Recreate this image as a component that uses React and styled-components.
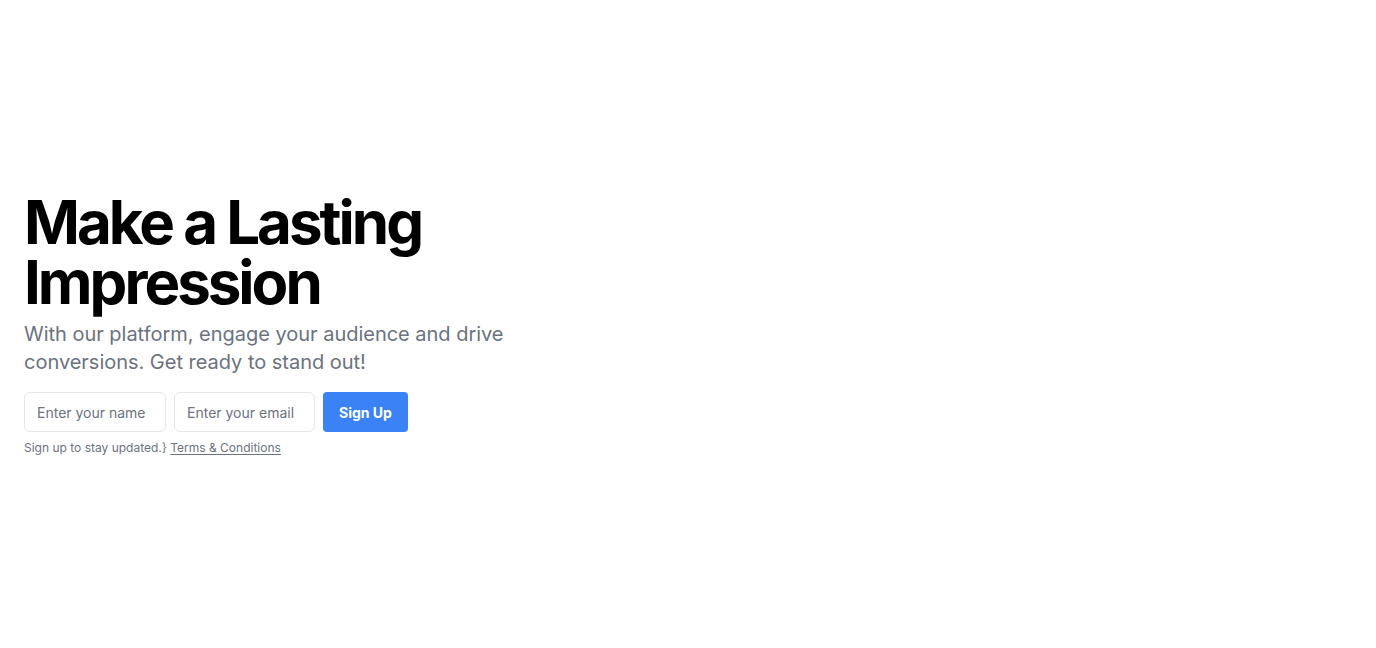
import React from "react";
import styled, { createGlobalStyle } from "styled-components";

const GlobalStyle = createGlobalStyle`
  html, body {
    margin: 0;
    padding: 0;
    background: #ffffff;
    font-family: Inter, "Noto Sans", sans-serif;
  }
  * { box-sizing: border-box; }
`;

const Section = styled.section`
  min-height: 648px;
  display: flex;
  align-items: center;
  padding: 0 24px;
`;

const Content = styled.div`
  display: flex;
  flex-direction: column;
  max-width: 540px;
`;

const Heading = styled.h1`
  margin: 0;
  font-size: 60px;
  line-height: 60px;
  font-weight: 700;
  letter-spacing: -0.05em;
  color: #000000;
`;

const Lead = styled.p`
  margin: 8px 0 0;
  font-size: 20px;
  line-height: 28px;
  letter-spacing: -0.001em;
  color: #6b7280;
`;

const Form = styled.form`
  display: flex;
  gap: 8px;
  margin-top: 16px;
`;

const Input = styled.input`
  width: ${(p) => p.$width}px;
  height: 40px;
  padding: 0 12px;
  border: 1px solid #e5e7eb;
  border-radius: 6px;
  font-family: inherit;
  font-size: 14px;
  color: #111827;
  background: #ffffff;
  outline: none;

  &::placeholder {
    color: #6b7280;
  }
`;

const Button = styled.button`
  height: 40px;
  padding: 0 16px;
  border: none;
  border-radius: 4px;
  background: #3b82f6;
  color: #ffffff;
  font-family: inherit;
  font-size: 14px;
  font-weight: 700;
  cursor: pointer;
`;

const Note = styled.p`
  margin: 8px 0 0;
  font-size: 12px;
  line-height: 16px;
  color: #6b7280;
`;

const TermsLink = styled.a`
  color: #6b7280;
  text-decoration: underline;
  text-underline-offset: 2px;
`;

export default function App() {
  return (
    <>
      <GlobalStyle />
      <Section>
        <Content>
          <Heading>
            Make a Lasting
            <br />
            Impression
          </Heading>
          <Lead>
            With our platform, engage your audience and drive conversions. Get
            ready to stand out!
          </Lead>
          <Form onSubmit={(e) => e.preventDefault()}>
            <Input $width={142} type="text" placeholder="Enter your name" />
            <Input $width={141} type="email" placeholder="Enter your email" />
            <Button type="submit">Sign Up</Button>
          </Form>
          <Note>
            Sign up to stay updated.{"}"}{" "}
            <TermsLink href="#">Terms &amp; Conditions</TermsLink>
          </Note>
        </Content>
      </Section>
    </>
  );
}
